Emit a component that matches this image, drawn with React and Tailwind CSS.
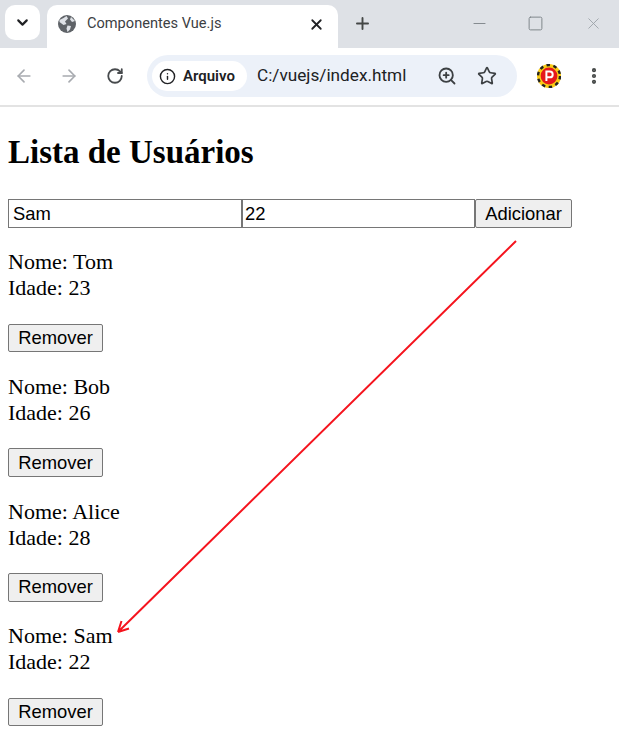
import { ArrowLeft, ArrowRight, ChevronDown, Info, Minus, Plus, RotateCw, Square, Star, X, ZoomIn, MoreVertical } from "lucide-react";

const USERS = [
  { name: "Tom", age: 23 },
  { name: "Bob", age: 26 },
  { name: "Alice", age: 28 },
  { name: "Sam", age: 22 },
];

function Globe() {
  return (
    <svg viewBox="0 0 18 18" className="w-[18px] h-[18px] shrink-0">
      <circle cx="9" cy="9" r="9" fill="#5f6368" />
      <path d="M1.5 5 L5.5 3 L8.5 1 L10 3.5 L7 6.5 L8.5 9 L5.5 10 L1.5 7 Z M9.5 10.5 L13 11 L12 14.5 L9.5 17 L8.5 13.5 Z M13 2 L17 6 L14 7 L12 4.5 Z" fill="#dee1e6" />
    </svg>
  );
}

function Avatar() {
  return (
    <svg viewBox="0 0 24 24" className="w-6 h-6">
      <circle cx="12" cy="12" r="12" fill="#facc15" />
      <circle cx="12" cy="12" r="11" fill="none" stroke="#222" strokeWidth="2.4" strokeDasharray="3.5 3.5" />
      <circle cx="12" cy="12" r="8.4" fill="#e5191c" />
      <path d="M9.4 17V7.5h3.4a2.9 2.9 0 0 1 0 5.8H9.4" fill="none" stroke="#fff" strokeWidth="2" />
    </svg>
  );
}

function BrowserChrome() {
  return (
    <div className="font-['Roboto','Noto_Sans',sans-serif]">
      <div className="h-12 bg-[#dee1e6] flex items-start pt-[5px] pl-[5px]">
        <div className="w-[35px] h-[35px] bg-white rounded-[10px] flex items-center justify-center mr-[7px]">
          <ChevronDown size={17} strokeWidth={3} className="text-[#202124]" />
        </div>
        <div className="w-[291px] h-[43px] bg-white rounded-t-[10px] flex items-center pl-[11px] pr-[13px] pb-[5px]">
          <Globe />
          <span className="ml-[11px] flex-1 text-[14.6px] text-[#3c4043]">Componentes Vue.js</span>
          <X size={17} strokeWidth={2.5} className="text-[#202124]" />
        </div>
        <div className="ml-[15px] mt-[9px]">
          <Plus size={19} strokeWidth={2.4} className="text-[#444746]" />
        </div>
        <div className="ml-auto flex items-center mt-[9px] pr-[16px] text-[#80868b]">
          <Minus size={19} strokeWidth={1.2} />
          <Square size={17} strokeWidth={1.4} className="ml-[38px]" />
          <X size={19} strokeWidth={1.1} className="text-[#9aa0a6] ml-[40px]" />
        </div>
      </div>
      <div className="h-[57px] bg-white flex items-center pl-[14px] pb-[1px]">
        <ArrowLeft size={20} strokeWidth={2} className="text-[#a8abb0]" />
        <ArrowRight size={20} strokeWidth={2} className="text-[#a8abb0] ml-[25px]" />
        <RotateCw size={18} strokeWidth={2.4} className="text-[#474a4d] ml-[27px]" />
        <div className="ml-[23px] w-[370px] h-[42px] rounded-full bg-[#ecf1f9] flex items-center pl-[5px] pr-[20px]">
          <div className="h-[30px] w-[95px] bg-white rounded-full flex items-center pl-[7px]">
            <Info size={17} strokeWidth={2} className="text-[#202124]" />
            <span className="ml-[7px] text-[15px] font-semibold text-[#202124]">Arquivo</span>
          </div>
          <span className="ml-[10px] flex-1 text-[17.2px] text-[#202124]">C:/vuejs/index.html</span>
          <ZoomIn size={20} strokeWidth={2.2} className="text-[#3c4043]" />
          <Star size={20} strokeWidth={2} className="text-[#3c4043] ml-[20px]" />
        </div>
        <div className="ml-[20px]"><Avatar /></div>
        <MoreVertical size={20} strokeWidth={3} className="text-[#444746] ml-[23px]" />
      </div>
      <div className="h-[2px] bg-[#e3e3e3]" />
    </div>
  );
}

export default function App() {
  return (
    <div className="relative w-[619px] h-[751px] overflow-hidden bg-white">
      <BrowserChrome />
      <div className="px-2 text-black font-['Liberation_Serif',serif] text-[22px] leading-[26px]">
        <h1 className="text-[33px] leading-[37px] font-bold mt-[27px] mb-[28px]">Lista de Usuários</h1>
        <div className="flex font-['Liberation_Sans',sans-serif] text-[18.4px]">
          <input readOnly value="Sam" className="w-[234px] h-[29px] border border-[#767676] px-[4px] outline-none" />
          <input readOnly value="22" className="w-[233px] h-[29px] border border-[#767676] px-[2px] outline-none" />
          <button className="w-[97px] h-[29px] border border-[#767676] rounded-[2px] bg-[#efefef]">Adicionar</button>
        </div>
        <div className="mt-[21.4px] flex flex-col gap-[21.6px]">
          {USERS.map((u) => (
            <div key={u.name}>
              <p>Nome: {u.name}</p>
              <p>Idade: {u.age}</p>
              <button className="mt-[22.4px] block w-[95px] h-[28.67px] border border-[#767676] rounded-[2px] bg-[#efefef] font-['Liberation_Sans',sans-serif] text-[18.4px] leading-none">Remover</button>
            </div>
          ))}
        </div>
      </div>
      {/* seta vermelha sobre a lista */}
      <svg className="absolute inset-0 pointer-events-none" width="619" height="751" viewBox="0 0 619 751">
        <path d="M516 241 L118 632 M118 632 L129 628.5 M118 632 L121.5 621" fill="none" stroke="#f5141e" strokeWidth="2" />
      </svg>
    </div>
  );
}
